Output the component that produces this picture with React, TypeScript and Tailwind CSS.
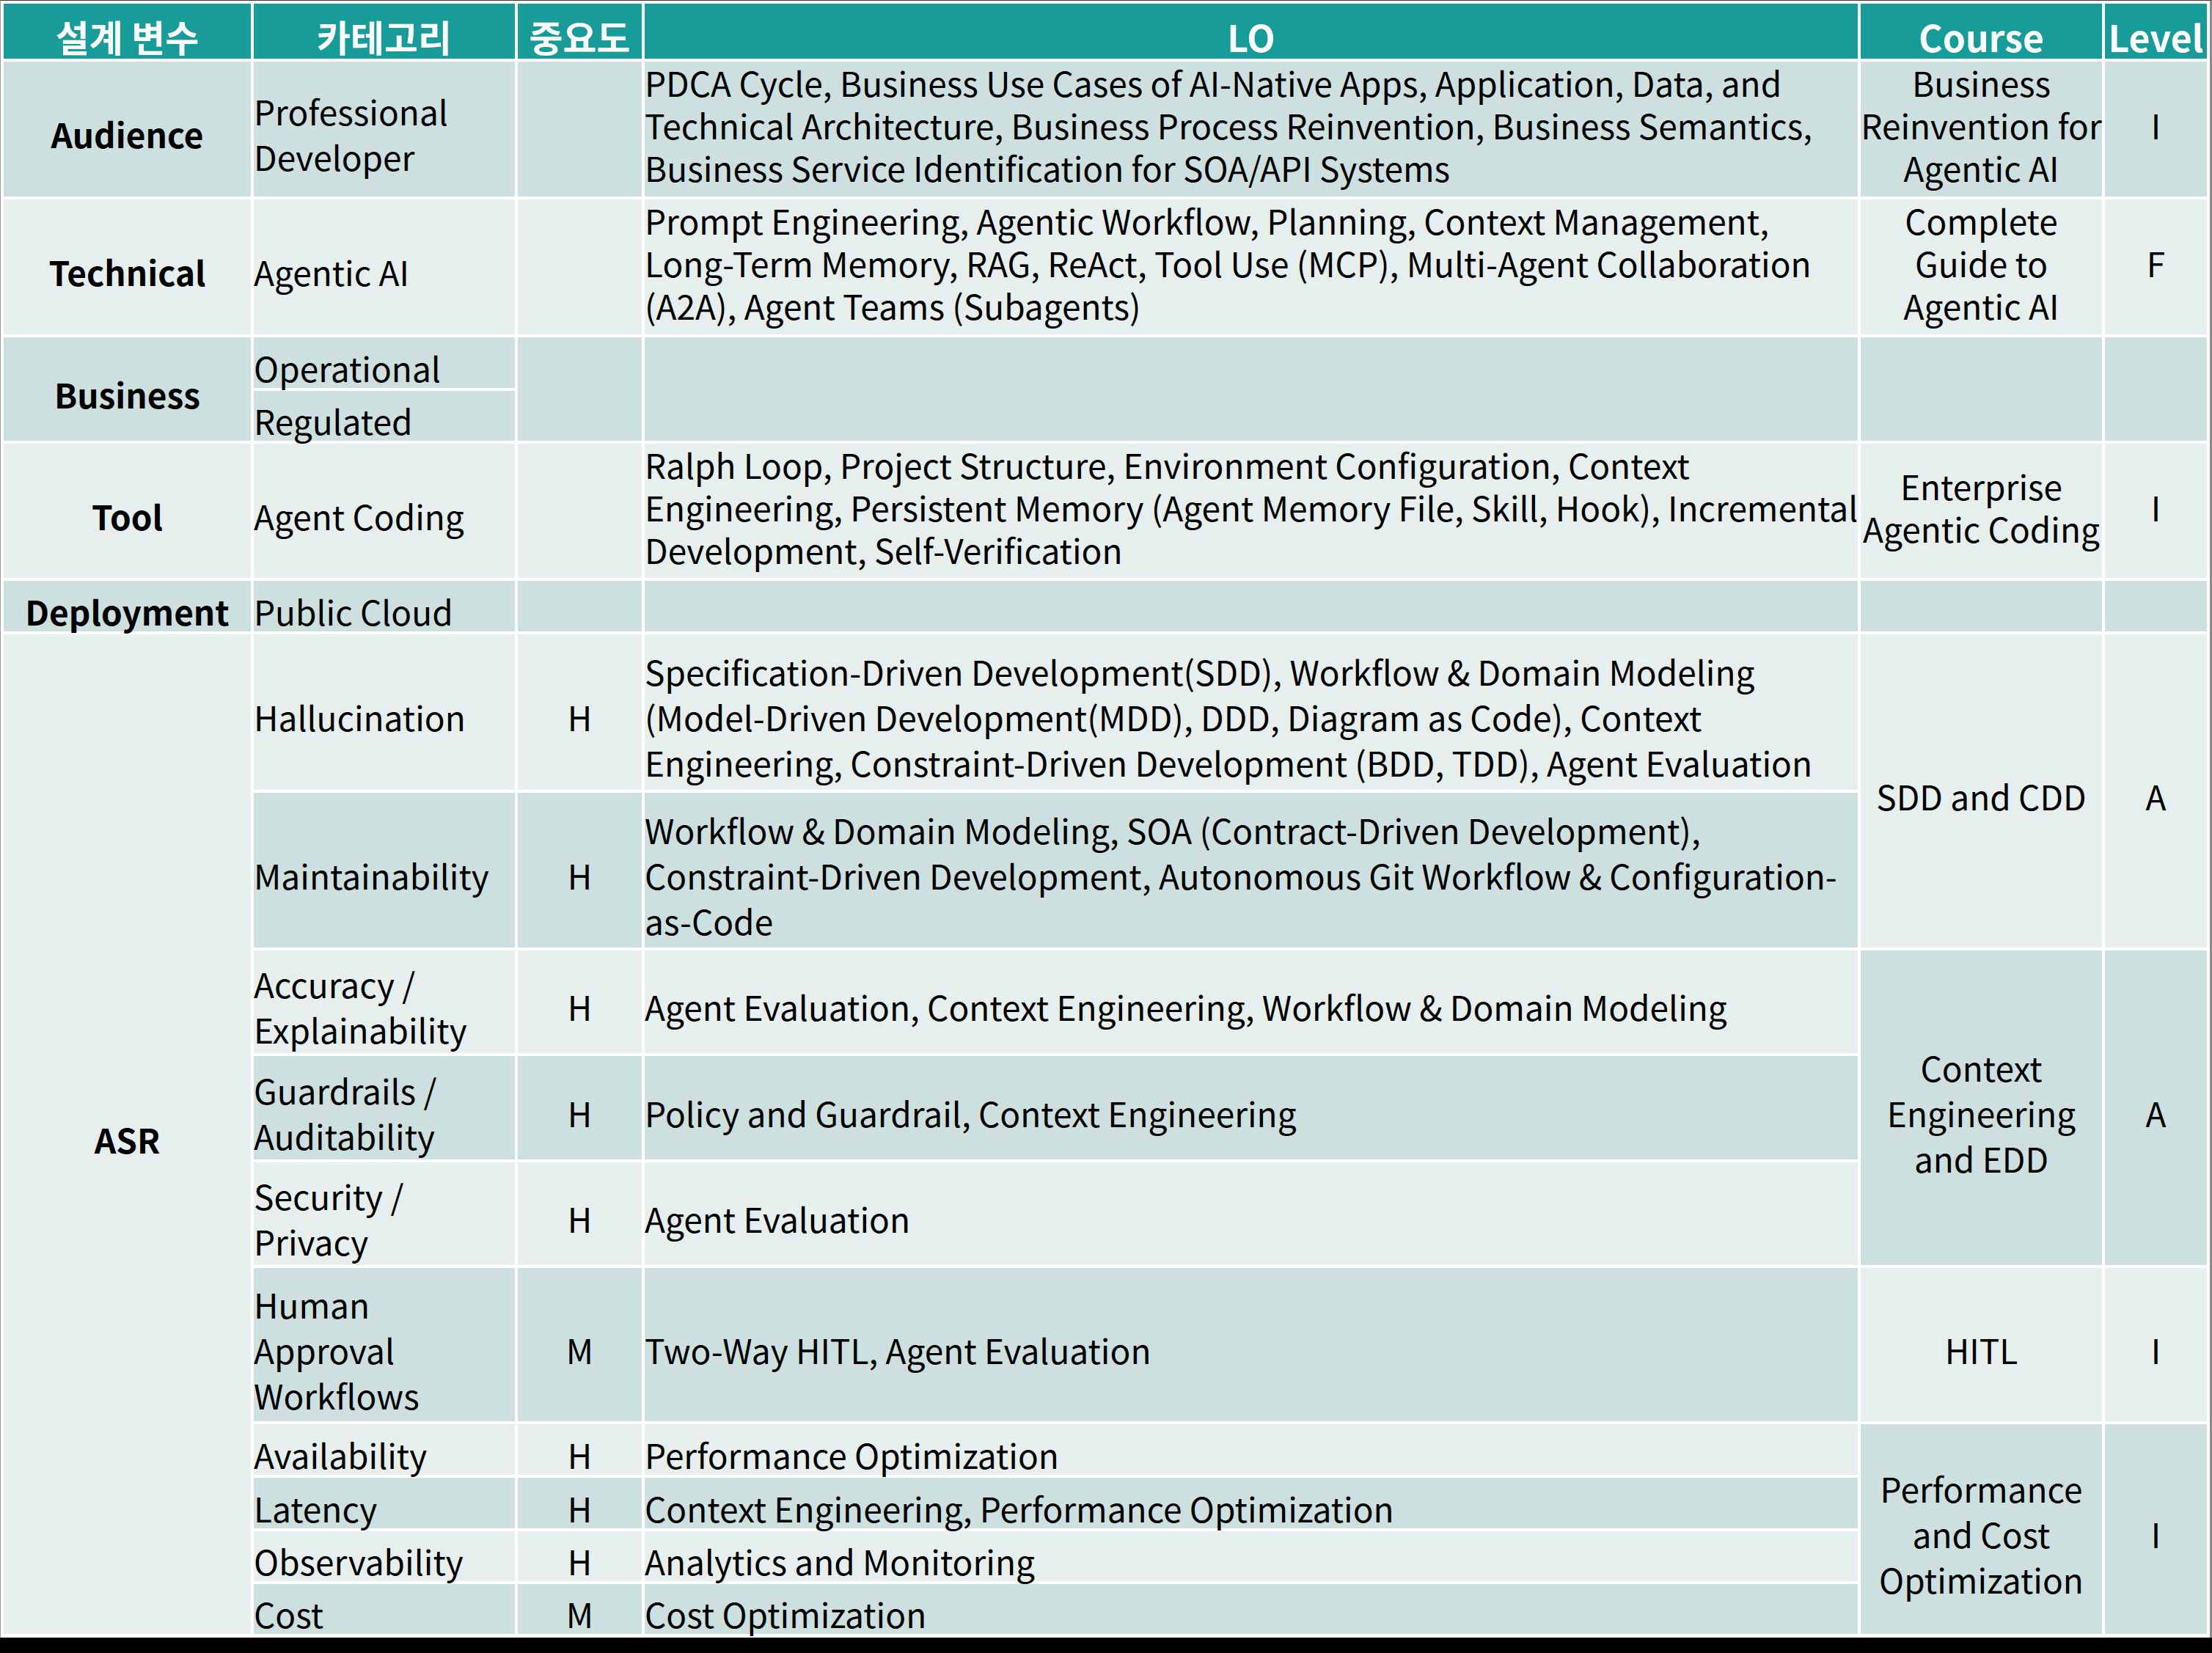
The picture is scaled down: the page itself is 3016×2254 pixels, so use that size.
import type { ReactNode } from 'react';

// 설계 변수 × 카테고리 × LO 매핑 표 — 슬라이드의 표를 그대로 옮긴 것.
type Tone = 'head' | 'dark' | 'light';

const toneClass: Record<Tone, string> = {
  head: 'bg-[#189c99] text-white font-bold',
  dark: 'bg-[#cddfdf] text-black',
  light: 'bg-[#e6efee] text-black',
};

function Cell({
  tone,
  className = '',
  align = 'center',
  tight = false,
  children,
}: {
  tone: Tone;
  className?: string;
  align?: 'left' | 'center';
  tight?: boolean; // 상단 행의 좁은 줄간격 셀
  children?: ReactNode;
}) {
  return (
    <div
      className={`flex items-center ${toneClass[tone]} ${
        align === 'left' ? 'justify-start text-left' : 'justify-center text-center'
      } ${tight ? 'leading-[58px]' : ''} ${className}`}
    >
      <div className={`whitespace-nowrap ${tight ? 'pb-[12px]' : 'pt-[12px]'}`}>{children}</div>
    </div>
  );
}

// 여러 줄 텍스트 — 원본의 줄바꿈 위치를 그대로 유지
function Lines({ lines }: { lines: string[] }) {
  return (
    <>
      {lines.map((l, i) => (
        <div key={i}>{l}</div>
      ))}
    </>
  );
}

export default function App() {
  return (
    <div
      className="flex h-[2254px] w-[3016px] flex-col bg-black"
      style={{ fontFamily: '"Noto Sans CJK KR", "Noto Sans", sans-serif' }}
    >
      <div className="h-[2233px] border-t border-l border-r-[3px] border-t-[#3a3a3a] border-l-[#9a9a9a] border-r-[#8a8a8a] bg-white pt-[4px] pl-[4px] pr-[4px]">
        <div className="grid grid-cols-[337px_356px_169px_1654px_329px_139px] grid-rows-[75px_184px_184px_69px_68px_183px_69px_212px_211px_140px_141px_140px_209px_69px_69px_68px_68px] gap-[4px] text-[46px] leading-[62px]">
          {/* 헤더 */}
          <Cell tone="head" className="text-[50px]">설계 변수</Cell>
          <Cell tone="head" className="text-[50px]">카테고리</Cell>
          <Cell tone="head" className="text-[50px]">중요도</Cell>
          <Cell tone="head" className="text-[50px]">LO</Cell>
          <Cell tone="head" className="text-[50px]">Course</Cell>
          <Cell tone="head" className="text-[50px]">Level</Cell>

          {/* Audience */}
          <Cell tone="dark" className="font-bold">Audience</Cell>
          <Cell tone="dark" align="left">
            <Lines lines={['Professional', 'Developer']} />
          </Cell>
          <Cell tone="dark" />
          <Cell tone="dark" align="left" tight>
            <Lines
              lines={[
                'PDCA Cycle, Business Use Cases of AI-Native Apps, Application, Data, and',
                'Technical Architecture, Business Process Reinvention, Business Semantics,',
                'Business Service Identification for SOA/API Systems',
              ]}
            />
          </Cell>
          <Cell tone="dark" tight>
            <Lines lines={['Business', 'Reinvention for', 'Agentic AI']} />
          </Cell>
          <Cell tone="dark" tight>I</Cell>

          {/* Technical */}
          <Cell tone="light" className="font-bold">Technical</Cell>
          <Cell tone="light" align="left">Agentic AI</Cell>
          <Cell tone="light" />
          <Cell tone="light" align="left" tight>
            <Lines
              lines={[
                'Prompt Engineering, Agentic Workflow, Planning, Context Management,',
                'Long-Term Memory, RAG, ReAct, Tool Use (MCP), Multi-Agent Collaboration',
                '(A2A), Agent Teams (Subagents)',
              ]}
            />
          </Cell>
          <Cell tone="light" tight>
            <Lines lines={['Complete', 'Guide to', 'Agentic AI']} />
          </Cell>
          <Cell tone="light" tight>F</Cell>

          {/* Business */}
          <Cell tone="dark" className="row-span-2 font-bold">Business</Cell>
          <Cell tone="dark" align="left">Operational</Cell>
          <Cell tone="dark" className="row-span-2" />
          <Cell tone="dark" className="row-span-2" />
          <Cell tone="dark" className="row-span-2" />
          <Cell tone="dark" className="row-span-2" />
          <Cell tone="dark" align="left">Regulated</Cell>

          {/* Tool */}
          <Cell tone="light" className="font-bold">Tool</Cell>
          <Cell tone="light" align="left">Agent Coding</Cell>
          <Cell tone="light" />
          <Cell tone="light" align="left" tight>
            <Lines
              lines={[
                'Ralph Loop, Project Structure, Environment Configuration, Context',
                'Engineering, Persistent Memory (Agent Memory File, Skill, Hook), Incremental',
                'Development, Self-Verification',
              ]}
            />
          </Cell>
          <Cell tone="light" tight>
            <Lines lines={['Enterprise', 'Agentic Coding']} />
          </Cell>
          <Cell tone="light" tight>I</Cell>

          {/* Deployment */}
          <Cell tone="dark" className="font-bold">Deployment</Cell>
          <Cell tone="dark" align="left">Public Cloud</Cell>
          <Cell tone="dark" />
          <Cell tone="dark" />
          <Cell tone="dark" />
          <Cell tone="dark" />

          {/* ASR */}
          <Cell tone="light" className="row-span-10 font-bold">ASR</Cell>
          <Cell tone="light" align="left">Hallucination</Cell>
          <Cell tone="light">H</Cell>
          <Cell tone="light" align="left">
            <Lines
              lines={[
                'Specification-Driven Development(SDD), Workflow & Domain Modeling',
                '(Model-Driven Development(MDD), DDD, Diagram as Code), Context',
                'Engineering, Constraint-Driven Development (BDD, TDD), Agent Evaluation',
              ]}
            />
          </Cell>
          <Cell tone="light" className="row-span-2">SDD and CDD</Cell>
          <Cell tone="light" className="row-span-2">A</Cell>

          <Cell tone="dark" align="left">Maintainability</Cell>
          <Cell tone="dark">H</Cell>
          <Cell tone="dark" align="left">
            <Lines
              lines={[
                'Workflow & Domain Modeling, SOA (Contract-Driven Development),',
                'Constraint-Driven Development, Autonomous Git Workflow & Configuration-',
                'as-Code',
              ]}
            />
          </Cell>

          <Cell tone="light" align="left">
            <Lines lines={['Accuracy /', 'Explainability']} />
          </Cell>
          <Cell tone="light">H</Cell>
          <Cell tone="light" align="left">
            Agent Evaluation, Context Engineering, Workflow &amp; Domain Modeling
          </Cell>
          <Cell tone="dark" className="row-span-3">
            <Lines lines={['Context', 'Engineering', 'and EDD']} />
          </Cell>
          <Cell tone="dark" className="row-span-3">A</Cell>

          <Cell tone="dark" align="left">
            <Lines lines={['Guardrails /', 'Auditability']} />
          </Cell>
          <Cell tone="dark">H</Cell>
          <Cell tone="dark" align="left">Policy and Guardrail, Context Engineering</Cell>

          <Cell tone="light" align="left">
            <Lines lines={['Security /', 'Privacy']} />
          </Cell>
          <Cell tone="light">H</Cell>
          <Cell tone="light" align="left">Agent Evaluation</Cell>

          <Cell tone="dark" align="left">
            <Lines lines={['Human', 'Approval', 'Workflows']} />
          </Cell>
          <Cell tone="dark">M</Cell>
          <Cell tone="dark" align="left">Two-Way HITL, Agent Evaluation</Cell>
          <Cell tone="light">HITL</Cell>
          <Cell tone="light">I</Cell>

          <Cell tone="light" align="left">Availability</Cell>
          <Cell tone="light">H</Cell>
          <Cell tone="light" align="left">Performance Optimization</Cell>
          <Cell tone="dark" className="row-span-4">
            <Lines lines={['Performance', 'and Cost', 'Optimization']} />
          </Cell>
          <Cell tone="dark" className="row-span-4">I</Cell>

          <Cell tone="dark" align="left">Latency</Cell>
          <Cell tone="dark">H</Cell>
          <Cell tone="dark" align="left">Context Engineering, Performance Optimization</Cell>

          <Cell tone="light" align="left">Observability</Cell>
          <Cell tone="light">H</Cell>
          <Cell tone="light" align="left">Analytics and Monitoring</Cell>

          <Cell tone="dark" align="left">Cost</Cell>
          <Cell tone="dark">M</Cell>
          <Cell tone="dark" align="left">Cost Optimization</Cell>
        </div>
      </div>
    </div>
  );
}
